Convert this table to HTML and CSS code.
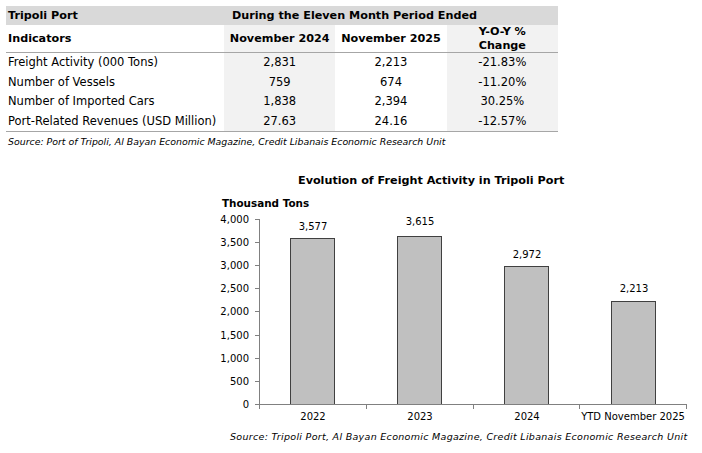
FILE: index.html
```html
<!DOCTYPE html>
<html>
<head>
<meta charset="utf-8">
<link rel="stylesheet" href="styles.css">
</head>
<body>
<table class="tbl">
  <tr class="h1">
    <th class="c1">Tripoli Port</th>
    <th colspan="3" class="span">During the Eleven Month Period Ended</th>
  </tr>
  <tr class="h2">
    <th class="c1">Indicators</th>
    <th class="c2">November 2024</th>
    <th class="c3">November 2025</th>
    <th class="c4">Y-O-Y %<br>Change</th>
  </tr>
  <tr class="row first">
    <td class="c1">Freight Activity (000 Tons)</td>
    <td class="c2">2,831</td>
    <td class="c3">2,213</td>
    <td class="c4">-21.83%</td>
  </tr>
  <tr class="row">
    <td class="c1">Number of Vessels</td>
    <td class="c2">759</td>
    <td class="c3">674</td>
    <td class="c4">-11.20%</td>
  </tr>
  <tr class="row">
    <td class="c1">Number of Imported Cars</td>
    <td class="c2">1,838</td>
    <td class="c3">2,394</td>
    <td class="c4">30.25%</td>
  </tr>
  <tr class="row last">
    <td class="c1">Port-Related Revenues (USD Million)</td>
    <td class="c2">27.63</td>
    <td class="c3">24.16</td>
    <td class="c4">-12.57%</td>
  </tr>
</table>
<p class="src">Source: Port of Tripoli, Al Bayan Economic Magazine, Credit Libanais Economic Research Unit</p>

<div class="chart">
  <div class="chart-title">Evolution of Freight Activity in Tripoli Port</div>
  <svg class="plot" width="702" height="238" viewBox="0 188 702 238">
    <text class="unit" x="222" y="207">Thousand Tons</text>
    <g class="yaxis">
      <line x1="259.5" y1="219" x2="259.5" y2="404.5"/>
      <line x1="255" y1="219.5" x2="259.5" y2="219.5"/>
      <line x1="255" y1="242.5" x2="259.5" y2="242.5"/>
      <line x1="255" y1="265.5" x2="259.5" y2="265.5"/>
      <line x1="255" y1="288.5" x2="259.5" y2="288.5"/>
      <line x1="255" y1="311.5" x2="259.5" y2="311.5"/>
      <line x1="255" y1="335.5" x2="259.5" y2="335.5"/>
      <line x1="255" y1="358.5" x2="259.5" y2="358.5"/>
      <line x1="255" y1="381.5" x2="259.5" y2="381.5"/>
      <line x1="255" y1="404.5" x2="259.5" y2="404.5"/>
    </g>
    <g class="ylabels">
      <text x="249" y="223">4,000</text>
      <text x="249" y="246">3,500</text>
      <text x="249" y="269">3,000</text>
      <text x="249" y="292">2,500</text>
      <text x="249" y="315">2,000</text>
      <text x="249" y="339">1,500</text>
      <text x="249" y="362">1,000</text>
      <text x="249" y="385">500</text>
      <text x="249" y="408">0</text>
    </g>
    <g class="bars">
      <rect x="290.5" y="238.5" width="44" height="166"/>
      <rect x="397.5" y="236.5" width="44" height="168"/>
      <rect x="504.5" y="266.5" width="44" height="138"/>
      <rect x="611.5" y="301.5" width="44" height="103"/>
    </g>
    <g class="vlabels">
      <text x="313" y="230">3,577</text>
      <text x="420" y="225">3,615</text>
      <text x="527" y="258">2,972</text>
      <text x="634" y="292">2,213</text>
    </g>
    <g class="xaxis">
      <line x1="259" y1="404.5" x2="687" y2="404.5"/>
      <line x1="259.5" y1="404" x2="259.5" y2="409"/>
      <line x1="366.5" y1="404" x2="366.5" y2="409"/>
      <line x1="473.5" y1="404" x2="473.5" y2="409"/>
      <line x1="579.5" y1="404" x2="579.5" y2="409"/>
      <line x1="686.5" y1="404" x2="686.5" y2="409"/>
    </g>
    <g class="xlabels">
      <text x="313" y="420">2022</text>
      <text x="420" y="420">2023</text>
      <text x="527" y="420">2024</text>
      <text x="633" y="420">YTD November 2025</text>
    </g>
  </svg>
  <p class="chart-src">Source: Tripoli Port, Al Bayan Economic Magazine, Credit Libanais Economic Research Unit</p>
</div>
</body>
</html>
```

FILE: styles.css
```css
html, body {
  margin: 0;
  padding: 0;
  background: #ffffff;
}
body {
  font-family: "DejaVu Sans", Verdana, sans-serif;
  color: #000000;
  width: 702px;
  height: 453px;
  overflow: hidden;
}
.tbl {
  border-collapse: collapse;
  margin: 6px 0 0 6px;
  width: 552px;
  font-size: 11.5px;
  table-layout: fixed;
}
.tbl th, .tbl td {
  padding: 0;
  line-height: 13px;
}
.tbl th {
  font-size: 11.2px;
}
.tbl .c1 { width: 216px; text-align: left; padding-left: 2px; }
.tbl .c2 { width: 138px; text-align: center; background: #f2f2f2; }
.tbl .c3 { width: 125px; text-align: center; }
.tbl .c4 { width: 73px; text-align: center; background: #f2f2f2; }
.h1 th {
  background: #d9d9d9;
  height: 19px;
  font-weight: bold;
}
.h1 .span {
  text-align: left;
  padding-left: 8px;
}
.h2 th {
  height: 27px;
  font-weight: bold;
  border-bottom: 1px solid #a6a6a6;
}
.h2 .c1 { background: #ffffff; }
.h2 .c4 { line-height: 13.5px; }
.row td {
  height: 19.5px;
}
.row.last td {
  border-bottom: 1px solid #a6a6a6;
}
.src {
  margin: 3px 0 0 8px;
  font-size: 9.4px;
  line-height: 14px;
  font-style: italic;
  color: #000000;
}
.chart {
  display: flex;
  flex-direction: column;
}
.chart-title {
  margin: 25px 0 0 0;
  padding-left: 298px;
  font-size: 11.2px;
  font-weight: bold;
  line-height: 14px;
}
.plot {
  display: block;
  font-family: "DejaVu Sans", Verdana, sans-serif;
}
.unit {
  font-size: 10.4px;
  font-weight: bold;
}
.yaxis line, .xaxis line {
  stroke: #808080;
  stroke-width: 1;
}
.ylabels text {
  font-size: 10px;
  text-anchor: end;
}
.bars rect {
  fill: #c0c0c0;
  stroke: #404040;
  stroke-width: 1;
}
.vlabels text, .xlabels text {
  font-size: 10px;
  text-anchor: middle;
}
.chart-src {
  margin: 4px 0 0 230px;
  font-size: 9.5px;
  letter-spacing: 0.3px;
  line-height: 14px;
  font-style: italic;
}
```
